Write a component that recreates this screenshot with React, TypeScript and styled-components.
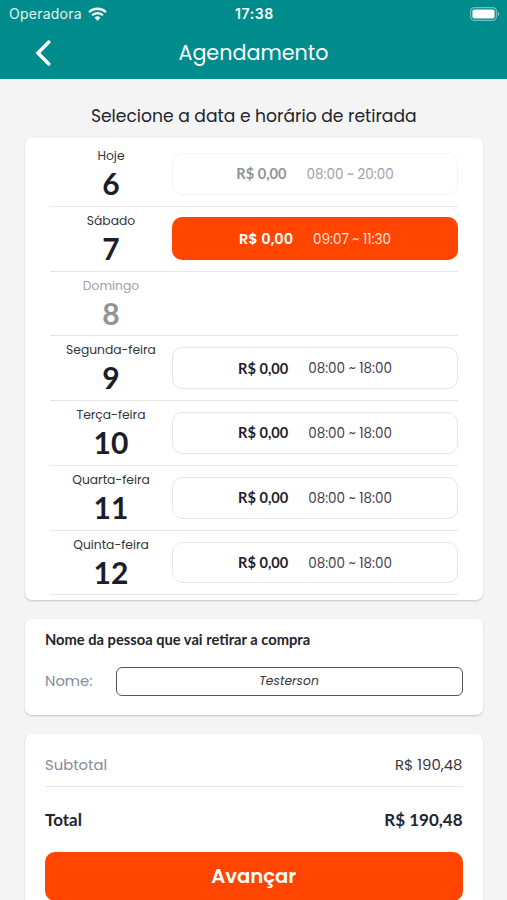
import React from "react";
import styled, { createGlobalStyle, css } from "styled-components";

const GlobalStyle = createGlobalStyle`
  *, *::before, *::after { box-sizing: border-box; }
  body {
    margin: 0;
    background: #f4f4f5;
    color: #23252d;
    font-family: Poppins, Inter, sans-serif;
    font-variant-ligatures: none;
  }
`;

const Screen = styled.div`
  width: 100%;
  height: 900px;
  overflow: hidden;
  display: flex;
  flex-direction: column;
`;

const Header = styled.header`
  flex: none;
  height: 79px;
  background: #008c8c;
  color: #fff;
`;

const StatusBar = styled.div`
  display: grid;
  grid-template-columns: 1fr auto 1fr;
  align-items: center;
  height: 27px;
  padding: 0 7px 0 9px;
  font: 400 14px/27px Inter, sans-serif;
`;

const Carrier = styled.div`
  display: flex;
  align-items: center;
  gap: 6px;
  color: #e2f3f3;
  letter-spacing: 0.24px;
`;

const Clock = styled.div`
  font-weight: 600;
  letter-spacing: 0.6px;
`;

const BatterySlot = styled.div`
  display: flex;
  justify-content: flex-end;
`;

const NavBar = styled.div`
  display: grid;
  grid-template-columns: 60px 1fr 60px;
  align-items: center;
  height: 51px;
`;

const BackButton = styled.button`
  display: flex;
  justify-content: flex-end;
  padding: 0 8px 0 0;
  border: 0;
  background: none;
  color: inherit;
`;

const Title = styled.h1`
  margin: 0;
  font-size: 20.7px;
  font-weight: 400;
  line-height: 51px;
  text-align: center;
`;

const Content = styled.main`
  flex: none;
  display: flex;
  flex-direction: column;
  gap: 19px;
  padding: 0 24.5px 0 25px;
`;

const Prompt = styled.h2`
  margin: 24px 0 -11.4px;
  font-size: 17.15px;
  font-weight: 400;
  line-height: 27px;
  text-align: center;
`;

const Card = styled.section`
  border-radius: 7px;
  background: #fff;
  box-shadow: 0 1px 2px rgba(0, 0, 0, 0.2);
`;

const Schedule = styled(Card)`
  height: 462.5px;
  padding: 4.3px 24.5px 0 25px;
  overflow: hidden;
`;

const DayRow = styled.div<{ $muted?: boolean }>`
  display: grid;
  grid-template-columns: 122px 1fr;
  align-items: center;
  height: 64.8px;
  border-bottom: 1.3px solid #e5e6e8;
  color: ${(p) => (p.$muted ? "#929394" : "#1b1e2a")};
`;

const DayLabel = styled.div`
  display: flex;
  flex-direction: column;
  align-items: center;
  height: 100%;
  padding-top: 4px;
`;

const Weekday = styled.span<{ $muted?: boolean }>`
  font-size: 12.3px;
  line-height: 20px;
  color: ${(p) => (p.$muted ? "#a0a0a2" : "#333439")};
`;

const DayNumber = styled.span`
  font: 700 30px/34px Lato, sans-serif;
`;

type SlotState = "open" | "disabled" | "selected";

const slotStyles = {
  open: css`
    border: 1.3px solid #e6e6e8;
    color: #1f222b;
  `,
  disabled: css`
    border: 1.3px solid #f3f3f4;
    color: #929394;
  `,
  selected: css`
    height: 43px;
    background: #ff4500;
    color: #fff;
  `,
};

const Slot = styled.button<{ $state: SlotState }>`
  display: flex;
  align-items: center;
  justify-content: center;
  gap: 20px;
  width: 100%;
  height: 41.5px;
  padding: 0;
  border: 0;
  border-radius: 10px;
  background: #fff;
  font-family: inherit;
  ${(p) => slotStyles[p.$state]}
`;

const Price = styled.span<{ $selected: boolean }>`
  font-family: ${(p) => (p.$selected ? "Poppins, Inter, sans-serif" : "Lato, sans-serif")};
  font-size: ${(p) => (p.$selected ? "14.5px" : "14.6px")};
  font-weight: ${(p) => (p.$selected ? 600 : 700)};
  padding-top: ${(p) => (p.$selected ? "1px" : "0")};
`;

const Hours = styled.span`
  padding-top: 2px;
  font-size: 13.5px;
  opacity: 0.87;
`;

const PickupCard = styled(Card)`
  height: 95.5px;
  padding: 8.7px 20px 0;
`;

const PickupTitle = styled.h3`
  margin: 0;
  font: 700 14.7px/22px Lato, sans-serif;
`;

const Field = styled.label`
  display: flex;
  align-items: center;
  justify-content: space-between;
  margin-top: 17px;
  height: 29px;
`;

const Muted = styled.span`
  font-size: 14.8px;
  line-height: 24px;
  color: #858a9c;
`;

const NameInput = styled.input`
  width: 347px;
  height: 28.5px;
  padding: 0;
  border: 1.5px solid #55565b;
  border-radius: 6px;
  background: #fff;
  color: #36373c;
  font: italic 400 12.3px Poppins, Inter, sans-serif;
  text-align: center;
  outline: none;
`;

const SummaryCard = styled(Card)`
  height: 190px;
  padding: 18.8px 20px 0;
`;

const Line = styled.div<{ $total?: boolean }>`
  display: flex;
  align-items: center;
  justify-content: space-between;
  ${(p) =>
    p.$total
      ? css`
          height: 65px;
          padding-top: 1px;
          font: 700 17px/24px Lato, sans-serif;
        `
      : css`
          height: 34.5px;
          padding-bottom: 9px;
          border-bottom: 1.3px solid #e6e7e9;
        `}
`;

const Amount = styled.span`
  font-size: 14.9px;
  line-height: 24px;
  color: #36373c;
`;

const SubmitButton = styled.button`
  display: block;
  width: 100%;
  height: 49px;
  padding: 0;
  border: 0;
  border-radius: 10px;
  background: #ff4500;
  color: #fff;
  font: 600 19.6px/48px Poppins, Inter, sans-serif;
`;

interface Day {
  weekday: string;
  day: number;
  hours?: string;
  state?: SlotState;
  muted?: boolean;
}

const days: Day[] = [
  { weekday: "Hoje", day: 6, hours: "08:00 ~ 20:00", state: "disabled" },
  { weekday: "Sábado", day: 7, hours: "09:07 ~ 11:30", state: "selected" },
  { weekday: "Domingo", day: 8, muted: true },
  { weekday: "Segunda-feira", day: 9, hours: "08:00 ~ 18:00" },
  { weekday: "Terça-feira", day: 10, hours: "08:00 ~ 18:00" },
  { weekday: "Quarta-feira", day: 11, hours: "08:00 ~ 18:00" },
  { weekday: "Quinta-feira", day: 12, hours: "08:00 ~ 18:00" },
];

const WifiIcon = () => (
  <svg width="19" height="14" viewBox="0 0 19 14" fill="none" stroke="#fff" strokeWidth="2.3">
    <path d="M1.1 5.2a12 12 0 0 1 16.8 0" />
    <path d="M4.1 8.3a7.7 7.7 0 0 1 10.8 0" />
    <path d="M9.5 13.7 6.6 10.8a4.1 4.1 0 0 1 5.8 0Z" fill="#fff" stroke="none" />
  </svg>
);

const BatteryIcon = () => (
  <svg width="30" height="14" viewBox="0 0 30 14" fill="none">
    <rect x="0.6" y="0.6" width="25.8" height="12.8" rx="3.6" stroke="#fff" strokeOpacity="0.45" strokeWidth="1.2" />
    <rect x="2.4" y="2.4" width="22.2" height="9.2" rx="2" fill="#fff" />
    <path d="M27.8 4.8a2.4 2.4 0 0 1 0 4.4Z" fill="#fff" fillOpacity="0.5" />
  </svg>
);

const BackIcon = () => (
  <svg width="18" height="28" viewBox="0 0 18 28" fill="none">
    <path d="M14.8 3 4 14l10.8 11" stroke="#fff" strokeWidth="3.5" strokeLinecap="round" strokeLinejoin="miter" />
  </svg>
);

export default function App() {
  return (
    <Screen>
      <GlobalStyle />
      <Header>
        <StatusBar>
          <Carrier>
            Operadora
            <WifiIcon />
          </Carrier>
          <Clock>17:38</Clock>
          <BatterySlot>
            <BatteryIcon />
          </BatterySlot>
        </StatusBar>
        <NavBar>
          <BackButton aria-label="Voltar">
            <BackIcon />
          </BackButton>
          <Title>Agendamento</Title>
        </NavBar>
      </Header>
      <Content>
        <Prompt>Selecione a data e horário de retirada</Prompt>
        <Schedule>
          {days.map(({ weekday, day, hours, state = "open", muted }) => (
            <DayRow key={day} $muted={muted}>
              <DayLabel>
                <Weekday $muted={muted}>{weekday}</Weekday>
                <DayNumber>{day}</DayNumber>
              </DayLabel>
              {hours && (
                <Slot $state={state}>
                  <Price $selected={state === "selected"}>R$ 0,00</Price>
                  <Hours>{hours}</Hours>
                </Slot>
              )}
            </DayRow>
          ))}
        </Schedule>
        <PickupCard>
          <PickupTitle>Nome da pessoa que vai retirar a compra</PickupTitle>
          <Field>
            <Muted>Nome:</Muted>
            <NameInput defaultValue="Testerson" />
          </Field>
        </PickupCard>
        <SummaryCard>
          <Line>
            <Muted>Subtotal</Muted>
            <Amount>R$ 190,48</Amount>
          </Line>
          <Line $total>
            <span>Total</span>
            <span>R$ 190,48</span>
          </Line>
          <SubmitButton>Avançar</SubmitButton>
        </SummaryCard>
      </Content>
    </Screen>
  );
}
